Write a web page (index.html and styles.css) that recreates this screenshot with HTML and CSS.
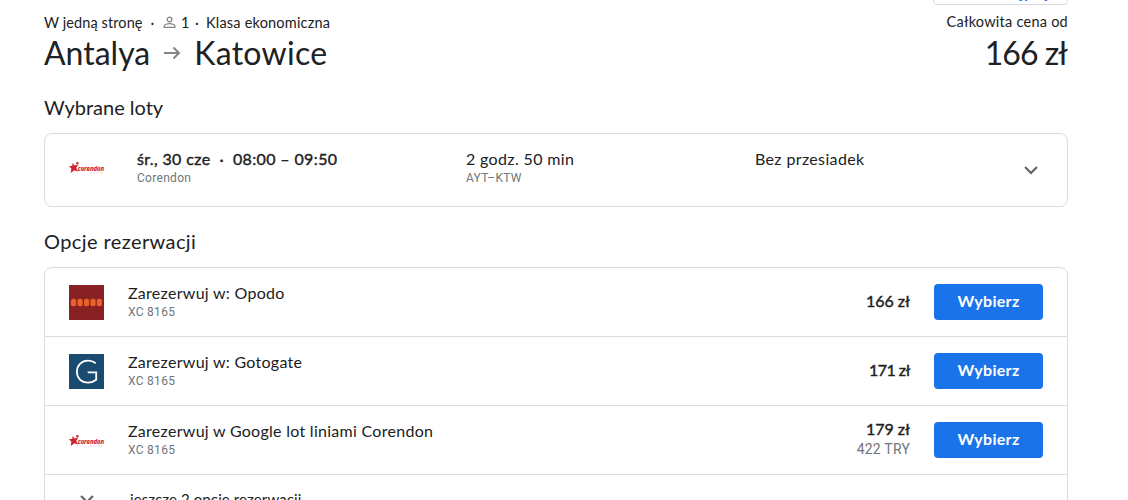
FILE: index.html
```
<!DOCTYPE html>
<html lang="pl">

<head>
    <meta charset="UTF-8">
    <meta name="viewport" content="width=device-width, initial-scale=1.0">
    <title>Antalya - Katowice</title>
    <link rel="stylesheet" href="styles.css">
</head>

<body>
    <!-- logo used in two places -->
    <svg class="sprite">
        <symbol id="corendon" viewBox="0 0 35 35">
            <path fill="#d2232a" d="M3.6 12.9 L5.6 15.5 L9.2 14.7 L7.2 17.9 L9.2 21.7 L5.6 20.3 L1.6 22.9 L2.4 18.7 L0 16.1 L3.2 15.900 Z" />
            <circle cx="8.4" cy="13.2" r="1.2" fill="#d2232a" />
            <text class="corendon-name" x="8.8" y="21" textLength="26.2" lengthAdjust="spacingAndGlyphs">corendon</text>
            <path stroke="#f3c9cb" stroke-width="0.8" stroke-dasharray="2 0.7" d="M21 22.8 H34.5" />
        </symbol>
        <symbol id="chevron" viewBox="0 0 24 24">
            <path fill="#5f6368" d="M12 16.400l-6.700-6.700 1.500-1.500 5.200 5.200 5.200-5.200 1.500 1.500z" />
        </symbol>
    </svg>

    <div class="page">
        <button class="share">
            <svg width="18" height="18" viewBox="0 0 24 24">
                <path fill="#1a73e8" d="M18 16a3 3 0 0 0-2 .8l-7.1-4.2v-1.2L16 7.2A3 3 0 1 0 15 5v.7L7.900 9.800a3 3 0 1 0 0 4.400l7.100 4.200V19a3 3 0 1 0 3-3z" />
            </svg>
            <span>Udostępnij</span>
        </button>

        <header class="trip">
            <div>
                <div class="trip-info">
                    <span class="type">W jedną stronę</span>
                    <span class="dot">·</span>
                    <svg width="14" height="14" viewBox="0 0 14 14" fill="none" stroke="#80868b" stroke-width="1.3">
                        <circle cx="6.500" cy="4.500" r="2.3" />
                        <path d="M1.200 12.400v-1.300c0-1.600 3.300-2.500 5.300-2.500s5.300.9 5.300 2.500v1.300z" />
                    </svg>
                    <span class="count">1</span>
                    <span class="dot">·</span>
                    <span class="cabin">Klasa ekonomiczna</span>
                </div>
                <h1 class="route">
                    <span class="from">Antalya</span>
                    <svg width="18" height="14" viewBox="0 0 18 14" fill="none" stroke="#80868b" stroke-width="2">
                        <path d="M1 7h15M10.500 1.500L16 7l-5.500 5.500" />
                    </svg>
                    <span class="to">Katowice</span>
                </h1>
            </div>
            <div class="total">
                <div class="total-label">Całkowita cena od</div>
                <div class="total-price">166 zł</div>
            </div>
        </header>

        <h2 class="title-flights">Wybrane loty</h2>
        <section class="card flight">
            <svg class="logo"><use href="#corendon" /></svg>
            <div>
                <div class="main when">śr., 30 cze &nbsp;·&nbsp; 08:00 – 09:50</div>
                <div class="sub">Corendon</div>
            </div>
            <div>
                <div class="main duration">2 godz. 50 min</div>
                <div class="sub">AYT–KTW</div>
            </div>
            <div>
                <div class="main stops">Bez przesiadek</div>
            </div>
            <svg class="chevron"><use href="#chevron" /></svg>
        </section>

        <h2 class="title-options">Opcje rezerwacji</h2>
        <section class="card options">
            <div class="option">
                <svg class="logo" viewBox="0 0 35 35">
                    <rect width="35" height="35" fill="#882024" />
                    <g fill="#e8622a">
                        <rect x="2" y="13.800" width="5.200" height="7.400" rx="2" />
                        <rect x="8.500" y="13.800" width="5.200" height="7.400" rx="2" />
                        <rect x="15" y="13.800" width="5.200" height="7.400" rx="2" />
                        <rect x="21.400" y="13.800" width="5.200" height="7.400" rx="2" />
                        <rect x="27.800" y="13.800" width="5.200" height="7.400" rx="2" />
                    </g>
                </svg>
                <div class="details">
                    <div class="main">Zarezerwuj w: Opodo</div>
                    <div class="sub">XC 8165</div>
                </div>
                <div class="price">166 zł</div>
                <button class="select">Wybierz</button>
            </div>
            <div class="option">
                <svg class="logo" viewBox="0 0 35 35">
                    <rect width="35" height="35" fill="#1a4b70" />
                    <path fill="none" stroke="#fff" stroke-width="1.800" d="M26.700 9.300C24.500 7.500 22 6.700 19 6.700C12.500 6.700 7.900 11.300 7.900 17.700S12.500 28.600 19 28.600C22.200 28.600 25 27.500 27.200 25.700V18.400H18.700" />
                </svg>
                <div class="details">
                    <div class="main">Zarezerwuj w: Gotogate</div>
                    <div class="sub">XC 8165</div>
                </div>
                <div class="price narrow">171 zł</div>
                <button class="select">Wybierz</button>
            </div>
            <div class="option">
                <svg class="logo"><use href="#corendon" /></svg>
                <div class="details">
                    <div class="main">Zarezerwuj w Google lot liniami Corendon</div>
                    <div class="sub">XC 8165</div>
                </div>
                <div class="price">179 zł<div class="local">422 TRY</div></div>
                <button class="select">Wybierz</button>
            </div>
            <div class="more">
                <svg class="chevron"><use href="#chevron" /></svg>
                <span>jeszcze 2 opcje rezerwacji</span>
            </div>
        </section>
    </div>
</body>

</html>
```
FILE: styles.css
```
/* Reset */
* {
    margin: 0;
    padding: 0;
    box-sizing: border-box;
}

body {
    background-color: #fff;
    color: #202124;
    font-family: Lato, "Open Sans", sans-serif;
}

svg {
    display: block;
    flex-shrink: 0;
}

.sprite {
    position: absolute;
    width: 0;
    height: 0;
}

.corendon-name {
    font: italic bold 7.5px "Open Sans", sans-serif;
    fill: #d2232a;
    stroke: #d2232a;
    stroke-width: 0.2px;
}

.page {
    height: 500px;
    padding: 0 60px 0 44px;
    overflow: hidden;
}

/* Share button, scrolled almost out of view */
.share {
    display: flex;
    align-items: center;
    gap: 8px;
    width: 135px;
    height: 36px;
    margin: -31px 0 0 auto;
    padding: 9px 0 0 16px;
    border: 1px solid #dadce0;
    border-radius: 4px;
    background-color: #fff;
    color: #1a73e8;
    font: bold 15px Lato, sans-serif;
}

/* Trip header */
.trip {
    display: flex;
    justify-content: space-between;
    height: 91px;
    padding-top: 7px;
}

.trip-info {
    display: flex;
    align-items: center;
    height: 20px;
    font-size: 14.5px;
    white-space: nowrap;
}

.route span {
    padding-bottom: 2px;
}

.trip-info .type {
    width: 98px;
    letter-spacing: 0.1px;
}

.trip-info .dot {
    width: 21px;
    text-align: center;
}

.trip-info .count {
    width: 7px;
    margin-left: 4px;
}

.trip-info .count + .dot {
    width: 18px;
}

.trip-info .cabin {
    letter-spacing: 0.2px;
}

.route {
    display: flex;
    align-items: center;
    height: 42px;
    font-size: 32px;
    font-weight: normal;
}

.route svg {
    margin: 0 13px;
}

.route .to {
    letter-spacing: 0.3px;
}

.total {
    text-align: right;
}

.total-label {
    height: 20px;
    font-size: 14.5px;
    line-height: 20px;
    letter-spacing: 0.25px;
}

.total-price {
    padding-right: 1px;
    font-size: 32px;
    line-height: 42px;
    letter-spacing: -1px;
}

h2 {
    height: 24px;
    font-size: 20px;
    font-weight: normal;
    line-height: 22px;
}

.title-options {
    letter-spacing: 0.4px;
}

/* Cards */
.card {
    border: 1px solid #dadce0;
    border-radius: 8px;
}

.logo {
    width: 35px;
    height: 35px;
}

.chevron {
    width: 24px;
    height: 24px;
}

.main {
    height: 20px;
    font-size: 16px;
    line-height: 18px;
    letter-spacing: 0.28px;
    white-space: nowrap;
}

.sub {
    color: #70757a;
    font: 12px/16px Roboto, sans-serif;
    letter-spacing: 0.3px;
}

.flight {
    display: grid;
    grid-template-columns: 68px 329px 289px 1fr 24px;
    height: 74px;
    margin: 13px 0 23px;
    padding: 16px 24px 0;
}

/* medium weight */
.flight .when,
.price {
    -webkit-text-stroke: 0.4px #202124;
}

.flight .when {
    letter-spacing: 0.37px;
}

.flight .duration,
.flight .stops {
    letter-spacing: 0.35px;
}

.flight .chevron {
    margin-top: 8px;
}

.options {
    height: 300px;
    margin-top: 13px;
}

.option {
    display: flex;
    align-items: center;
    height: 69px;
    padding: 0 24px;
    border-bottom: 1px solid #dadce0;
}

.details {
    flex: 1;
    margin-left: 24px;
}

.price {
    margin-right: 24px;
    padding-bottom: 2px;
    font-size: 16px;
    line-height: 20px;
    text-align: right;
}

.price.narrow {
    letter-spacing: -0.5px;
}

.local {
    color: #70757a;
    font: 14px/20px Roboto, sans-serif;
    letter-spacing: 0.2px;
    -webkit-text-stroke: 0;
}

.select {
    width: 109px;
    height: 36px;
    padding-bottom: 3px;
    border: none;
    border-radius: 4px;
    background-color: #1a73e8;
    color: #fff;
    font: bold 16px Lato, sans-serif;
    letter-spacing: 0.3px;
}

.more {
    display: flex;
    align-items: center;
    gap: 31px;
    height: 48px;
    padding-left: 30px;
    font-size: 15px;
    letter-spacing: 0.1px;
}
```
